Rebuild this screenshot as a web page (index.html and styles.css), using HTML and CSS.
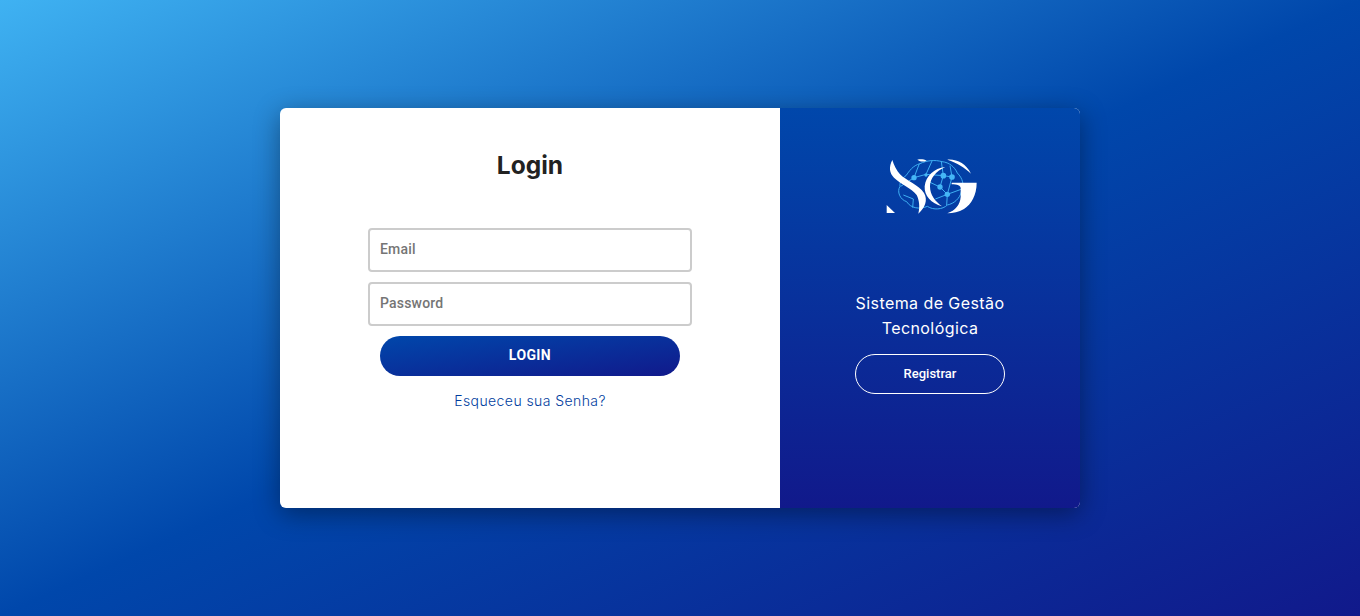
FILE: index.html
```html
<!DOCTYPE html>
<html lang="pt">
<head>
<meta charset="utf-8">
<title>Login</title>
<link rel="stylesheet" href="styles.css">
</head>
<body>
<main class="card">
  <section class="login">
    <h1 class="title">Login</h1>
    <form class="form">
      <input class="field" type="text" placeholder="Email">
      <input class="field" type="password" placeholder="Password">
      <button class="submit" type="button">LOGIN</button>
      <a class="forgot" href="#">Esqueceu sua Senha?</a>
    </form>
  </section>
  <aside class="side">
    <svg class="logo" viewBox="0 0 360 240" aria-label="SG">
      <g fill="none" stroke="#3eaef2" stroke-width="3" stroke-linejoin="round">
        <path d="M108 92C118 78 128 62 150 56C170 46 196 44 216 50C238 52 254 66 262 84C278 100 284 120 274 140C270 160 252 176 232 180C218 194 190 196 172 184C150 194 122 190 110 170C90 164 80 140 90 124C88 110 98 98 108 92Z"/>
        <path d="M132 98L168 88L220 92L246 96M210 126L232 148L196 162M130 162L100 150M132 98L148 56M168 88L186 48M220 92L214 50M246 96L240 62M220 92L210 126M246 96L232 148M276 132L232 148M210 126L180 112M232 148L230 180M130 162L128 188M92 124L132 98"/>
      </g>
      <g fill="#45b6f6">
        <circle cx="132" cy="98" r="8"/><circle cx="220" cy="92" r="8.5"/><circle cx="246" cy="96" r="8.5"/><circle cx="210" cy="126" r="8"/><circle cx="232" cy="148" r="8"/><circle cx="168" cy="90" r="5"/>
      </g>
      <g fill="#fff">
        <path d="M67 45C56 66 58 84 72 98C92 118 124 128 140 150C148 166 150 186 145 206C166 188 174 164 162 144C146 120 110 108 90 88C80 76 72 62 67 45Z"/>
        <path d="M50 180L75 204L50 204Z"/>
        <path d="M142 44C152 42 162 43 170 47C160 52 150 50 142 44Z"/>
        <path d="M226 66C192 70 168 92 164 124C162 152 184 176 216 184C196 170 180 150 180 124C180 100 198 78 226 66Z"/>
        <path d="M232 44C262 42 288 56 303 86C284 68 262 54 232 44Z"/>
        <path d="M245 113H320C320 150 304 178 282 192C266 201 250 205 232 205C256 196 270 180 272 156V130C272 122 262 118 245 118Z"/>
      </g>
    </svg>
    <p class="tagline">Sistema de Gestão Tecnológica</p>
    <a class="register" href="#">Registrar</a>
  </aside>
</main>
</body>
</html>
```
FILE: styles.css
```css
* { box-sizing: border-box; }
html, body { height: 100%; }
body {
  margin: 0;
  min-height: 616px;
  display: flex;
  align-items: center;
  justify-content: center;
  background: linear-gradient(to bottom right, #3fb2f2 0%, #0047ab 50%, #11198b 100%);
  font-family: "Roboto", Arial, sans-serif;
}
.card {
  width: 800px;
  height: 400px;
  display: flex;
  border-radius: 6px;
  background: #fff;
  box-shadow: 0 6px 26px rgba(0, 0, 0, 0.38);
  overflow: hidden;
}
.login {
  width: 500px;
  display: flex;
  flex-direction: column;
  align-items: center;
  padding-top: 41px;
}
.title {
  margin: 0;
  font-family: "Inter", sans-serif;
  font-size: 24.5px;
  font-weight: 700;
  line-height: 32px;
  color: #222;
}
.form {
  margin-top: 47px;
  width: 324px;
  display: flex;
  flex-direction: column;
  align-items: center;
}
.field {
  width: 324px;
  height: 44px;
  margin-bottom: 10px;
  padding: 0 10px 2px;
  border: 2px solid #ccc;
  border-radius: 4px;
  outline: none;
  background: #fff;
  font-family: "Roboto", Arial, sans-serif;
  font-size: 14px;
  font-weight: 500;
  letter-spacing: 0.2px;
  color: #757575;
}
.field::placeholder { color: #757575; opacity: 1; }
.submit {
  width: 300px;
  height: 40px;
  padding: 0 0 2px;
  border: 0;
  border-radius: 20px;
  background: linear-gradient(to bottom right, #0047ab, #11198b);
  color: #fff;
  font-family: "Roboto", Arial, sans-serif;
  font-size: 14px;
  font-weight: 700;
  letter-spacing: 0.4px;
}
.forgot {
  margin-top: 15px;
  font-family: "Inter", sans-serif;
  font-size: 14px;
  font-weight: 300;
  letter-spacing: 0.42px;
  line-height: 20px;
  color: #003d9e;
  text-decoration: none;
}
.side {
  width: 300px;
  display: flex;
  flex-direction: column;
  align-items: center;
  background: linear-gradient(to bottom, #0047ab, #11198b);
  color: #fff;
}
.logo {
  display: block;
  width: 120px;
  height: 80px;
  margin-top: 37px;
}
.tagline {
  width: 170px;
  margin: 66px 0 0;
  font-family: "Inter", sans-serif;
  font-size: 16px;
  font-weight: 400;
  letter-spacing: 0.42px;
  line-height: 25px;
  text-align: center;
}
.register {
  width: 150px;
  height: 40px;
  margin-top: 13px;
  padding-bottom: 1px;
  display: flex;
  align-items: center;
  justify-content: center;
  border: 1px solid #fff;
  border-radius: 20px;
  color: #fff;
  font-size: 13px;
  font-weight: 500;
  text-decoration: none;
}
```
